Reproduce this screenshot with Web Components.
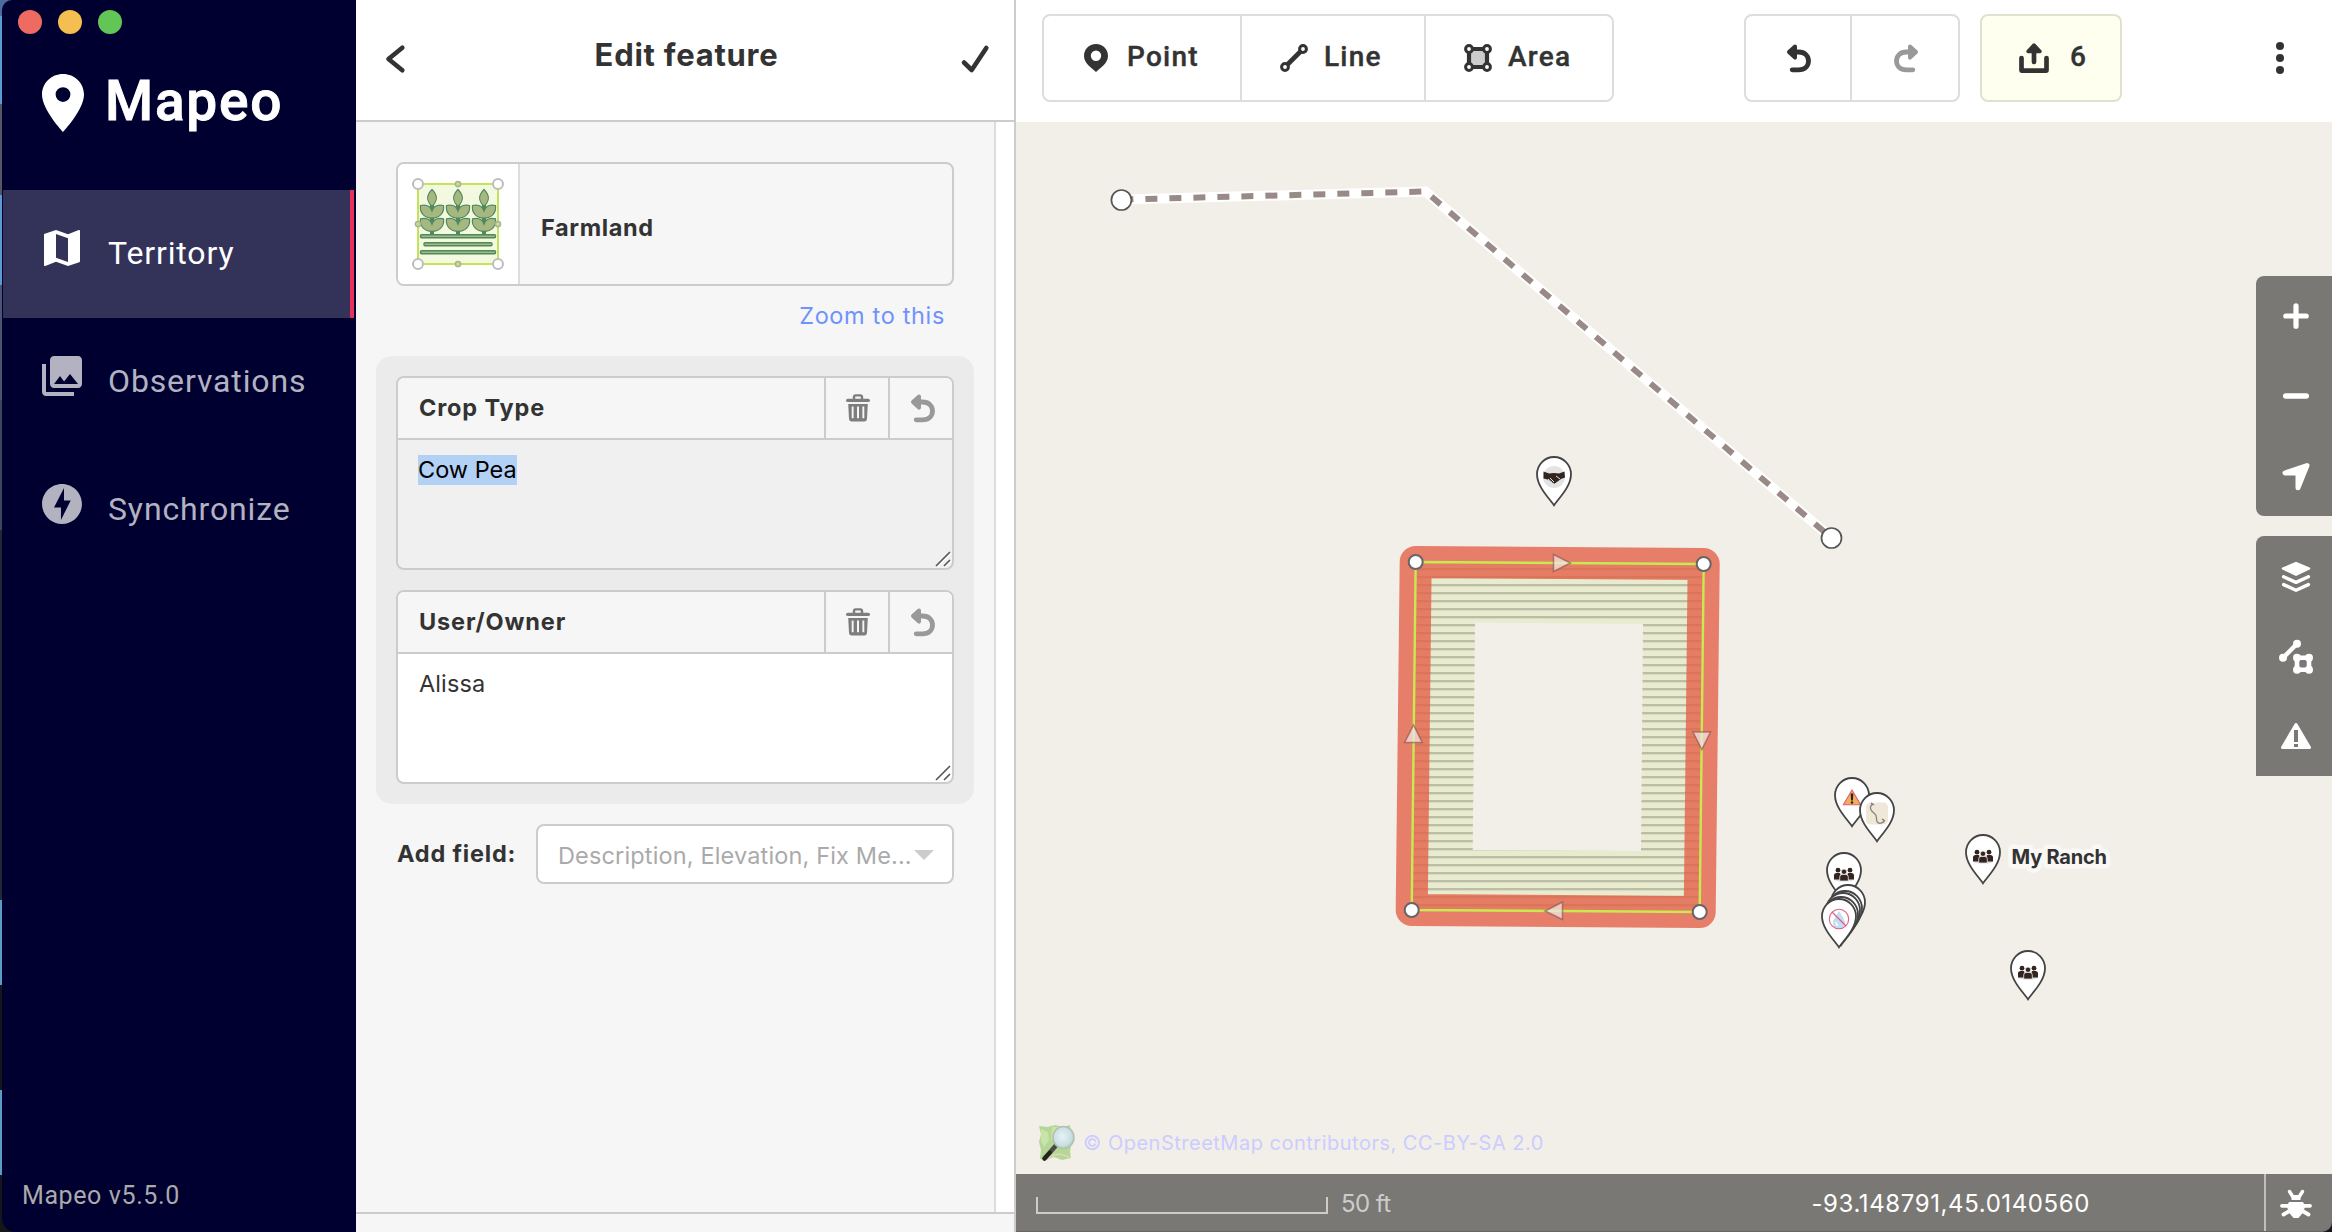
<!DOCTYPE html>
<html lang="en">
<head>
<meta charset="utf-8">
<title>Mapeo</title>
<style>
html,body{margin:0;height:100%;overflow:hidden;background:#14161c}
body{font-family:Inter,"Liberation Sans",sans-serif;font-size:24px;color:#333}
</style>
</head>
<body>
<app-window></app-window>
<script>
const define = (name, html) => {
  const t = document.createElement('template');
  t.innerHTML = html;
  customElements.define(name, class extends HTMLElement {
    constructor(){ super(); this.attachShadow({mode:'open'}).append(t.content.cloneNode(true)); }
  });
};

/* ---------- icons ---------- */
const UNDO = '<path d="M9 2.6 3 8l6 5.6z" fill="currentColor" stroke="currentColor" stroke-width="4" stroke-linejoin="round"/><path d="M4 8h8.5C19 8 22.5 12 22.5 17S19 25.8 12.5 25.8H6.2" fill="none" stroke="currentColor" stroke-width="4.8" stroke-linecap="round"/>';
const ICONS = {
  logo:[42,58,'<path fill-rule="evenodd" d="M21 0C9.2 0 0 9.2 0 20.6 0 36 21 58 21 58s21-22 21-37.4C42 9.2 32.8 0 21 0zm0 28a7.4 7.4 0 1 1 0-14.8A7.4 7.4 0 0 1 21 28z" fill="currentColor"/>'],
  map:[24,24,'<path fill="currentColor" d="M20.5 3l-.16.03L15 5.1 9 3 3.36 4.9c-.21.07-.36.25-.36.48V20.500c0 .28.22.5.5.5l.16-.03L9 18.900l6 2.100 5.640-1.900c.21-.07.36-.25.36-.48V3.500c0-.28-.22-.5-.5-.5zM15 19l-6-2.110V5l6 2.110V19z"/>'],
  photos:[24,24,'<path fill="currentColor" d="M22 16V4c0-1.100-.9-2-2-2H8c-1.100 0-2 .9-2 2v12c0 1.100.9 2 2 2h12c1.100 0 2-.9 2-2zm-11-4l2.030 2.710L16 11l4 5H8l3-4zM2 6v14c0 1.100.9 2 2 2h14v-2H4V6H2z"/>'],
  bolt:[24,24,'<path fill="currentColor" d="M12 2.020c-5.510 0-9.980 4.470-9.980 9.980s4.470 9.980 9.980 9.980 9.980-4.470 9.980-9.980S17.510 2.020 12 2.020zM11.480 20v-6.260H8L13 4v6.260h3.350L11.480 20z"/>'],
  back:[20,28,'<path d="M17.300 2.800 3.500 14l13.800 11.200" fill="none" stroke="currentColor" stroke-width="4.600" stroke-linecap="round" stroke-linejoin="round"/>'],
  check:[28,28,'<path d="M3 17.500 10.700 25 25.300 3" fill="none" stroke="currentColor" stroke-width="4.600" stroke-linecap="round" stroke-linejoin="round"/>'],
  undo:[25,28,UNDO],
  redo:[25,28,'<g transform="matrix(-1 0 0 1 25 0)">'+UNDO+'</g>'],
  trash:[24,28,'<path fill="none" stroke="currentColor" stroke-width="2.400" d="M8 5V3.200Q8 1.400 9.600 1.400h4.800q1.600 0 1.600 1.800V5"/><path fill="currentColor" d="M2 4.800h20q2 0 2 1.600T22 8H2Q0 8 0 6.400t2-1.600z"/><path fill="currentColor" fill-rule="evenodd" d="M2.200 10h19.600l-.8 15q-.2 2.400-2.400 2.400H5.400Q3.200 27.400 3 25zM5.700 12.500v11.800h1.900V12.500zm5.300 0v11.800h2V12.500zm5.400 0v11.800h1.900V12.500z"/>'],
  point:[24,28,'<path fill-rule="evenodd" fill="currentColor" d="M12 0C5 0 0 5.300 0 12c0 7 7 11.500 12 16 5-4.500 12-9 12-16C24 5.300 19 0 12 0zm0 17a5.200 5.200 0 1 1 0-10.400A5.200 5.200 0 0 1 12 17z"/>'],
  line:[28,28,'<path d="M5 23 23 5" stroke="currentColor" stroke-width="4.600"/><g fill="#fff" stroke="currentColor" stroke-width="3"><circle cx="5" cy="23" r="3.400"/><circle cx="23" cy="5" r="3.400"/></g>'],
  area:[28,28,'<path d="M5 5h18v18H5z" fill="#ccc" stroke="currentColor" stroke-width="4.200"/><g fill="#fff" stroke="currentColor" stroke-width="3"><circle cx="5" cy="5" r="3.400"/><circle cx="23" cy="5" r="3.400"/><circle cx="5" cy="23" r="3.400"/><circle cx="23" cy="23" r="3.400"/></g>'],
  share:[30,30,'<path d="M2.500 15v12.600h25V15M15 6v13" fill="none" stroke="currentColor" stroke-width="4.700" stroke-linecap="round" stroke-linejoin="round"/><path d="M9 8.500 15 2l6 6.500z" fill="currentColor" stroke="currentColor" stroke-width="3.400" stroke-linejoin="round"/>'],
  dots:[8,32,'<g fill="currentColor"><circle cx="4" cy="4" r="4"/><circle cx="4" cy="16" r="4"/><circle cx="4" cy="28" r="4"/></g>'],
  plus:[26,26,'<path d="M13 2.800v20.400M2.800 13h20.400" stroke="currentColor" stroke-width="5.200" stroke-linecap="round"/>'],
  minus:[26,26,'<path d="M2.800 13h20.400" stroke="currentColor" stroke-width="5.600" stroke-linecap="round"/>'],
  locate:[28,28,'<path d="M25 3.500 3 11h13v14.800z" fill="currentColor" stroke="currentColor" stroke-width="5" stroke-linejoin="round"/>'],
  layers:[30,30,'<path d="M15 .8 28.600 6.600q1.600 1 0 2L15 15 1.400 8.600q-1.600-1 0-2z" fill="currentColor"/><path d="M2.600 15.800 15 21.400 27.400 15.800M2.600 23.600 15 29.200l12.400-5.600" fill="none" stroke="currentColor" stroke-width="3.400" stroke-linecap="round" stroke-linejoin="round"/>'],
  data:[34,34,'<g transform="translate(0 .8)"><path d="M4 18 18 4" stroke="currentColor" stroke-width="4.400"/><path d="M18 18h12v12H18z" fill="none" stroke="currentColor" stroke-width="4.600"/><g fill="currentColor"><circle cx="4" cy="18" r="4"/><circle cx="18" cy="4" r="4"/><circle cx="18" cy="18" r="4"/><circle cx="30" cy="18" r="4"/><circle cx="18" cy="30" r="4"/><circle cx="30" cy="30" r="4"/></g></g>'],
  warn:[30,26,'<path d="M15 1.500 28.500 24.500h-27z" fill="currentColor" stroke="currentColor" stroke-width="3" stroke-linejoin="round"/><path d="M13 7h4v12h-4zM13 21h4v3h-4z" fill="#7a7875"/>'],
  bug:[32,28,'<path d="M9.500 1.500 13 7M22.500 1.500 19 7" stroke="currentColor" stroke-width="3.400" stroke-linecap="round"/><path fill="currentColor" d="M11.500 5h9v5h-9zM9 12h14l2 4-1.500 6-5 6h-5l-5-6L7 16z"/><path d="M2 15.800h28M3.500 24.500l6-3.500M28.500 24.500l-6-3.500" stroke="currentColor" stroke-width="3.800" stroke-linecap="round"/>'],
  caret:[20,10,'<path d="M0 0h20L10 10z" fill="currentColor"/>'],
  grip:[16,16,'<path d="M1 15 15 1M9 15l6-6" stroke="#fff" stroke-width="1.500" transform="translate(1 1)"/><path d="M1 15 15 1M9 15l6-6" stroke="#555" stroke-width="1.600"/>']
};
customElements.define('ui-icon', class extends HTMLElement {
  connectedCallback(){
    const [w,h,body] = ICONS[this.getAttribute('name')];
    const k = +(this.getAttribute('scale')||1);
    this.attachShadow({mode:'open'}).innerHTML =
      `<style>:host{display:block;flex:none;width:${w*k}px;height:${h*k}px}svg{display:block;overflow:visible}</style><svg width="${w*k}" height="${h*k}" viewBox="0 0 ${w} ${h}">${body}</svg>`;
  }
});

/* ---------- sidebar ---------- */
define('nav-item', `<style>
:host{display:flex;height:128px;box-sizing:border-box;padding-left:35px;gap:22px;align-items:center;color:#b2b2c1;font:400 32px Roboto,sans-serif;letter-spacing:.87px;margin-right:2px;border-right:4px solid transparent}
:host([active]){background:#33335a;color:#fff;border-right-color:#e8305c}
span{margin-bottom:2px}
</style><slot name="icon"></slot><span><slot></slot></span>`);

define('side-bar', `<style>
:host{display:flex;flex-direction:column;width:353px;flex:none;background:#000030;border-radius:10px 0 0 14px}
.lights{display:flex;gap:16px;padding:10px 0 0 15px}
.lights i{width:24px;height:24px;border-radius:50%}
.brand{display:flex;align-items:center;gap:21px;color:#fff;height:58px;margin:40px 0 58px;padding-left:39px;font:500 55px Roboto,sans-serif;letter-spacing:1.8px}
.brand span{margin-top:-4px;-webkit-text-stroke:.9px #fff}
.ver{margin-top:auto;padding:0 0 20px 19px;color:#aaa;font:400 25px/32px Roboto,sans-serif;letter-spacing:.6px}
[slot=icon]{margin-bottom:12px}
</style>
<div class="lights"><i style="background:#ed6b60"></i><i style="background:#f5be50"></i><i style="background:#62c656"></i></div>
<div class="brand"><ui-icon name="logo"></ui-icon><span>Mapeo</span></div>
<nav-item active><ui-icon slot="icon" name="map" scale="2"></ui-icon>Territory</nav-item>
<nav-item><ui-icon slot="icon" name="photos" scale="2"></ui-icon>Observations</nav-item>
<nav-item><ui-icon slot="icon" name="bolt" scale="2"></ui-icon>Synchronize</nav-item>
<div class="ver">Mapeo v5.5.0</div>`);

/* ---------- edit panel ---------- */
define('preset-card', `<style>
:host{display:flex;height:120px;border:2px solid #ccc;border-radius:8px;background:#f6f6f6;overflow:hidden}
.ic{width:120px;background:#fff;border-right:2px solid #ddd}
.t{align-self:center;padding:7px 0 0 21px;font-weight:700;font-size:23.500px;letter-spacing:.62px}
svg{display:block}
</style>
<div class="ic"><svg width="120" height="120" viewBox="398 164 120 120">
<defs><g id="p" fill="#a6b880" stroke="#4f8a5e" stroke-width="1.200"><path d="M0 205V235" stroke-width="4"/><path d="M0 189.500c6 6 6 11 0 17-6-6-6-11 0-17z"/><path d="M-11.500 205.500c6-1.200 10 .8 11.500 5.500 1.500-4.700 5.500-6.700 11.500-5.500 1 7.500-4 12.500-11.500 12.500s-12.500-5-11.500-12.500z"/><path d="M-11.500 218.800c6-1.200 10 .8 11.500 5.500 1.500-4.700 5.500-6.700 11.500-5.500 1 7.500-4 12.500-11.500 12.500s-12.500-5-11.500-12.500z"/></g></defs>
<path d="M418 184h80v80h-80z" fill="#f3f9de" stroke="#c5e35a" stroke-width="2"/>
<use href="#p" x="432"/><use href="#p" x="458"/><use href="#p" x="484"/>
<g fill="#a6b880" stroke="#4f8a5e" stroke-width="1.400"><rect x="420.500" y="234.700" width="75" height="3" rx="1"/><rect x="424" y="242.700" width="68" height="3" rx="1"/><rect x="420.500" y="250.700" width="75" height="3" rx="1"/></g>
<g fill="#fff" stroke="#bdbdbd" stroke-width="2"><circle cx="418" cy="184" r="5"/><circle cx="498" cy="184" r="5"/><circle cx="418" cy="264" r="5"/><circle cx="498" cy="264" r="5"/></g>
<g fill="#ccd8a4" stroke="#a9b48a" stroke-width="1.500"><circle cx="458" cy="184" r="2.600"/><circle cx="458" cy="264" r="2.600"/><circle cx="418" cy="224" r="2.600"/><circle cx="498" cy="224" r="2.600"/></g>
</svg></div><div class="t"><slot></slot></div>`);

define('field-card', `<style>
:host{display:flex;flex-direction:column;height:190px;border:2px solid #ccc;border-radius:8px;overflow:hidden;background:#fff}
:host([selected]){background:#f0f0f0}
.h{display:flex;height:60px;border-bottom:2px solid #ccc;background:#f6f6f6}
.l{flex:1;padding:0 21px;font-weight:700;font-size:23.500px;line-height:60px;letter-spacing:.85px}
.b{display:flex;align-items:center;justify-content:center;width:60px;padding-left:2px;border-left:2px solid #ccc;color:#7d7d7d}
.b+.b{color:#999}
.v{flex:1;display:flex;padding:15px 20px 13px;align-items:flex-start;line-height:30px;font-size:23.500px}
:host([selected]) .v span{background:#b3d0f5;color:#000}
:host(:not([selected])) .v{padding-left:21px;letter-spacing:.1px}
.g{align-self:flex-end;margin:0 1px 1px auto}
</style>
<div class="h"><div class="l"><slot name="label"></slot></div><div class="b"><ui-icon name="trash"></ui-icon></div><div class="b"><ui-icon name="undo"></ui-icon></div></div>
<div class="v"><span><slot></slot></span></div><ui-icon class="g" name="grip"></ui-icon>`);

define('add-field', `<style>
:host{display:flex;justify-content:space-between;height:60px}
.l{font-weight:700;font-size:23.500px;line-height:60px;padding-left:1px;letter-spacing:.8px}
.s{box-sizing:border-box;width:418px;border:2px solid #ccc;border-radius:8px;background:#fff;display:flex;align-items:center;padding:3px 18px 0 20px;justify-content:space-between;color:#aaa;font-size:23.500px;letter-spacing:.15px}
ui-icon{color:#ccc;margin-bottom:2px}
</style><div class="l">Add field:</div><div class="s"><span>Description, Elevation, Fix Me...</span><ui-icon name="caret"></ui-icon></div>`);

define('edit-panel', `<style>
:host{display:flex;flex-direction:column;width:658px;flex:none;background:#fff;border-right:2px solid #ccc}
header{display:flex;justify-content:space-between;align-items:center;height:120px;border-bottom:2px solid #ccc;padding:0 25px 0 29px}
header ui-icon{margin-bottom:2px}
h1{margin:0 0 12px 7px;font-size:31px;font-weight:700;letter-spacing:.75px}
.body{flex:1;box-sizing:border-box;width:640px;padding:40px 20px 0;background:#f6f6f6;border-right:2px solid #ddd;display:flex;flex-direction:column}
.z{align-self:flex-end;margin-right:29px;line-height:30px;padding:15px 0 25px;color:#7092ff;font-size:23.500px;letter-spacing:.65px}
.grp{margin:0 0 20px;width:558px;padding:20px;background:#ebebeb;border-radius:16px;display:flex;flex-direction:column;gap:20px}
.foot{height:18px;border-top:2px solid #ccc;background:#f6f6f6}
preset-card,add-field{margin:0 20px}
</style>
<header><ui-icon name="back"></ui-icon><h1>Edit feature</h1><ui-icon name="check"></ui-icon></header>
<div class="body"><preset-card>Farmland</preset-card>
<div class="z">Zoom to this</div>
<div class="grp">
<field-card selected><span slot="label">Crop Type</span>Cow Pea</field-card>
<field-card><span slot="label">User/Owner</span>Alissa</field-card></div>
<add-field></add-field></div>
<div class="foot"></div>`);

/* ---------- toolbar ---------- */
define('tool-group', `<style>
:host{display:flex;box-sizing:border-box;height:88px;border:2px solid #ddd;border-radius:8px;background:#fff}
:host([warm]){background:#fffff0;border-color:#e0e2cf}
</style><slot></slot>`);
define('tool-button', `<style>
:host{display:flex;box-sizing:border-box;align-items:center;color:#333;font:500 28px Roboto,sans-serif;letter-spacing:1.25px}
:host(:not(:first-child)){border-left:2px solid #ddd}
:host([dim]){color:#999}
::slotted(span){margin-top:-3px;-webkit-text-stroke:.4px currentColor}
</style><slot></slot>`);
define('tool-bar', `<style>
:host{display:flex;height:122px;box-sizing:border-box;padding:14px 48px 0 26px;background:#fff;color:#333}
ui-icon[name=dots]{margin:28px 0 0 auto}
</style>
<tool-group><tool-button style="width:196px;padding-left:40px;gap:19px"><ui-icon name="point"></ui-icon><span>Point</span></tool-button>
<tool-button style="width:184px;padding-left:38px;gap:16px"><ui-icon name="line"></ui-icon><span>Line</span></tool-button>
<tool-button style="width:188px;padding-left:38px;gap:16px"><ui-icon name="area"></ui-icon><span>Area</span></tool-button></tool-group>
<tool-group style="margin-left:130px"><tool-button style="width:104px;padding-left:40px"><ui-icon name="undo"></ui-icon></tool-button><tool-button dim style="width:108px;padding-left:42px"><ui-icon name="redo"></ui-icon></tool-button></tool-group>
<tool-group warm style="margin-left:20px;width:142px"><tool-button style="padding-left:37px;gap:21px"><ui-icon name="share"></ui-icon><span>6</span></tool-button></tool-group>
<ui-icon name="dots"></ui-icon>`);

/* ---------- map ---------- */
const PEOPLE = '<ellipse cx="18" cy="27" rx="10" ry="3" fill="#ddd"/><g fill="#33241f"><circle cx="12" cy="18.200" r="2.400"/><circle cx="24" cy="18.200" r="2.400"/><path d="M8 27.500v-4q0-2.600 2.600-2.600h2.800q1 0 1 1v5.600zM28 27.500v-4q0-2.600-2.600-2.600h-2.800q-1 0-1 1v5.600z"/></g><g fill="#33241f" stroke="#fff" stroke-width=".7"><circle cx="18" cy="19.800" r="2.700"/><path d="M13.700 29v-4q0-2.600 2.600-2.600h3.400q2.600 0 2.600 2.600v4z"/></g>';
const GLYPHS = {
  people:PEOPLE, none:'',
  hands:'<circle cx="18" cy="21" r="11" fill="#e3e3e3"/><path d="M7.500 15.500l5.500 2 5-.5 5 .5 5.500-2 .5 6-4 1.500-6.500 4.800-7-4.300-4-1z" fill="#33241f"/><path d="M12 23l4 3.500M14 22l4 4M20 20l4 3" stroke="#e3e3e3" stroke-width="1"/>',
  danger:'<path d="M18 13l8.600 14.800H9.400z" fill="#f3ae5c" stroke="#df5f6c" stroke-width="1.100"/><path d="M16.700 16.500h2.600l-.4 7h-1.800z" fill="#222"/><circle cx="18" cy="25.500" r="1.200" fill="#222"/>',
  path:'<rect x="7" y="10.500" width="22" height="22" rx="4.500" fill="#efe8d9"/><path d="M13.500 12c-4 3.500-1.500 7 2 9.500 3.500 2.500 1 5 2.500 8s6.500 2 7.500-1.500" fill="none" stroke="#8a857c" stroke-width="1.400"/><path d="M12 11l3 2M23 27l3 2" stroke="#777" stroke-width="1.200"/>',
  water:'<path d="M18 13c3 5 6 9 6 12a5.800 5.800 0 0 1-12 0c0-3 3-7 6-12z" fill="#c3ddf3"/><path d="M15 24c0 2 1 3 2 3.500" stroke="#fff" fill="none" stroke-width="1.500"/><circle cx="18" cy="21" r="9.700" fill="none" stroke="#e0607f" stroke-width="1.100"/><path d="M11 14l14 14" stroke="#e0607f" stroke-width="1.200"/>'
};
customElements.define('map-pin', class extends HTMLElement {
  connectedCallback(){
    const [x,y] = this.getAttribute('at').split(',').map(Number);
    this.attachShadow({mode:'open'}).innerHTML =
    `<style>:host{position:absolute;left:${x-1016-18}px;top:${y-122}px}svg{display:block}</style><svg width="36" height="51" viewBox="0 0 36 51"><path d="M18 49.300C14 43 1 31 1 18.200A17 17.200 0 0 1 35 18.200C35 31 22 43 18 49.300z" fill="#fff" stroke="#444" stroke-width="1.800"/>${GLYPHS[this.getAttribute('kind')]}</svg>`;
  }
});
define('map-controls', `<style>
:host{position:absolute;right:0;top:154px;width:76px;display:flex;flex-direction:column;gap:20px;color:#fff}
div{display:flex;flex-direction:column;background:#7a7875;border-radius:8px 0 0 8px}
div+div{border-radius:8px 0 0 0}
i{display:flex;height:80px;align-items:center;justify-content:center;padding-left:4px}
</style>
<div><i><ui-icon name="plus"></ui-icon></i><i><ui-icon name="minus"></ui-icon></i><i><ui-icon name="locate"></ui-icon></i></div>
<div><i><ui-icon name="layers"></ui-icon></i><i><ui-icon name="data"></ui-icon></i><i><ui-icon name="warn"></ui-icon></i></div>`);

define('map-credit', `<style>
:host{position:absolute;left:22px;bottom:12px;display:flex;align-items:center;gap:8px;color:#ccf;font-size:20px;letter-spacing:.5px}
svg{display:block}
</style><svg width="37" height="38" viewBox="0 0 37 38">
<defs><radialGradient id="r" cx=".45" cy=".45" r=".6"><stop offset="0" stop-color="#e6f2f8"/><stop offset=".7" stop-color="#c9e0e2"/><stop offset="1" stop-color="#aec5bb"/></radialGradient></defs>
<path d="M1 2l8 1 8-2 8 2 7-2 1 10 0 10-1 7 1 6-9 2-8-3-8 3-6-1 1-9-2-8 2-8z" fill="#b4d795"/><path d="M3 5l7 3 1 8-5 7-3-6zM14 3l6 0-3 10-4 4z" fill="#cbe3ab"/><path d="M10 35q9-9 22-1" fill="none" stroke="#dfd6b2" stroke-width="1.500"/>
<path d="M17.500 22 6.500 34.500" stroke="#4a4a46" stroke-width="4.600" stroke-linecap="round"/><path d="M12 28.500 6.500 34.500" stroke="#222" stroke-width="4" stroke-linecap="round"/><ellipse cx="25.500" cy="13.500" rx="10.500" ry="11" fill="url(#r)" stroke="#b4bfb2" stroke-width="1.500"/></svg>
<span>© OpenStreetMap contributors, CC-BY-SA 2.0</span>`);

define('map-canvas', `<style>
:host{display:block;position:relative;flex:1;background:#f2efe9;overflow:hidden}
svg.c{display:block}
text{font:700 20px Inter,sans-serif;letter-spacing:-.2px;fill:#333;stroke:#f9f8f5;stroke-width:9px;stroke-linejoin:round;paint-order:stroke}
</style>
<svg class="c" width="1316" height="1052" viewBox="1016 122 1316 1052">
<defs><pattern id="h" width="8" height="8" patternUnits="userSpaceOnUse"><rect width="8" height="8" fill="#e9ebcf"/><rect width="8" height="2" fill="#bcbda6"/><rect y="2" width="8" height="1" fill="#d9dbc0"/></pattern></defs>
<g fill="none"><path d="M1121.400 199.600 1425.500 191.500 1831 537.500" stroke="#fff" stroke-width="10"/><path d="M1121.400 199.600 1425.500 191.500 1831 537.500" stroke="#998a88" stroke-width="6" stroke-dasharray="12 12"/></g>
<g fill="#fff" stroke="#555" stroke-width="1.700"><circle cx="1121.400" cy="200" r="10"/><circle cx="1831.500" cy="538" r="10"/></g>
<path fill="url(#h)" fill-rule="evenodd" d="M1415.700 562 1703.700 564 1699.700 912 1411.700 910zM1475 622.500 1643 624 1641 851 1472.700 850z"/>
<path d="M1415.700 562 1703.700 564 1699.700 912 1411.700 910z" fill="none" stroke="rgba(227,97,73,.8)" stroke-width="32" stroke-linejoin="round"/>
<path d="M1415.700 562 1703.700 564 1699.700 912 1411.700 910z" fill="none" stroke="#c8ea50" stroke-width="2.400"/>
<g fill="rgba(240,230,225,.75)" stroke="rgba(120,70,60,.55)" stroke-width="1.500"><path d="M1553.500 554.500v17l17-8.500zM1693 732h17.500l-8.700 17.500zM1562.500 902v17.500l-17.500-8.500zM1404.700 742.500h17.500l-8.700-17.500z"/></g>
<g fill="#fff" stroke="#666" stroke-width="2"><circle cx="1415.700" cy="562" r="7"/><circle cx="1703.700" cy="564" r="7"/><circle cx="1699.700" cy="912" r="7"/><circle cx="1411.700" cy="910" r="7"/></g>
<text x="2011.500" y="864">My Ranch</text>
</svg>
<map-pin at="1553.700,456" kind="hands"></map-pin>
<map-pin at="1851.700,777" kind="danger"></map-pin><map-pin at="1877,792" kind="path"></map-pin>
<map-pin at="1844.300,852" kind="people"></map-pin>
<map-pin at="1847.700,884" kind="none"></map-pin><map-pin at="1844.500,890" kind="none"></map-pin><map-pin at="1843,891.500" kind="none"></map-pin><map-pin at="1841,896" kind="none"></map-pin><map-pin at="1839,898" kind="water"></map-pin>
<map-pin at="1982.800,834" kind="people"></map-pin><map-pin at="2028,949.500" kind="people"></map-pin>
<map-controls></map-controls><map-credit></map-credit>`);

define('status-bar', `<style>
:host{display:flex;height:57px;background:#7a7875;color:#ccc;align-items:stretch;border-bottom:1px solid #6b6361;border-radius:0 0 10px 0;font-size:24px}
.s{width:288px;height:15px;border:2px solid #ccc;border-top:0;margin:23px 13px 0 20px}
.t{line-height:60px;letter-spacing:-.6px}
.c{margin-left:auto;color:#fff;padding-right:174px;letter-spacing:.6px}
.b{width:68px;border-left:2px solid #c0bfbd;color:#fff;display:flex;align-items:center;justify-content:center;box-sizing:border-box;padding:3px 6px 0 0}
</style><div class="s"></div><div class="t">50 ft</div><div class="t c">-93.148791,45.0140560</div><div class="b"><ui-icon name="bug"></ui-icon></div>`);

define('app-window', `<style>
:host{display:flex;height:1232px;width:2332px;overflow:hidden;background:linear-gradient(#4d6a9c 50%,#14161c 50%)}
.desk{width:2px;flex:none;background:linear-gradient(#4d6a9c 0 16px,#5b9bd0 16px 104px,#55565f 104px 195px,#5b9bd0 195px 285px,#4b5570 285px 400px,#3a4560 400px 530px,#222835 530px 900px,#5b9bc4 900px 985px,#14161c 985px 1090px,#5b9bc4 1090px 1175px,#14161c 1175px)}
side-bar{padding-left:1px}
main{flex:1;display:flex;flex-direction:column;min-width:0}
</style><div class="desk"></div><side-bar></side-bar><edit-panel></edit-panel><main><tool-bar></tool-bar><map-canvas></map-canvas><status-bar></status-bar></main>`);
</script>
</body>
</html>
